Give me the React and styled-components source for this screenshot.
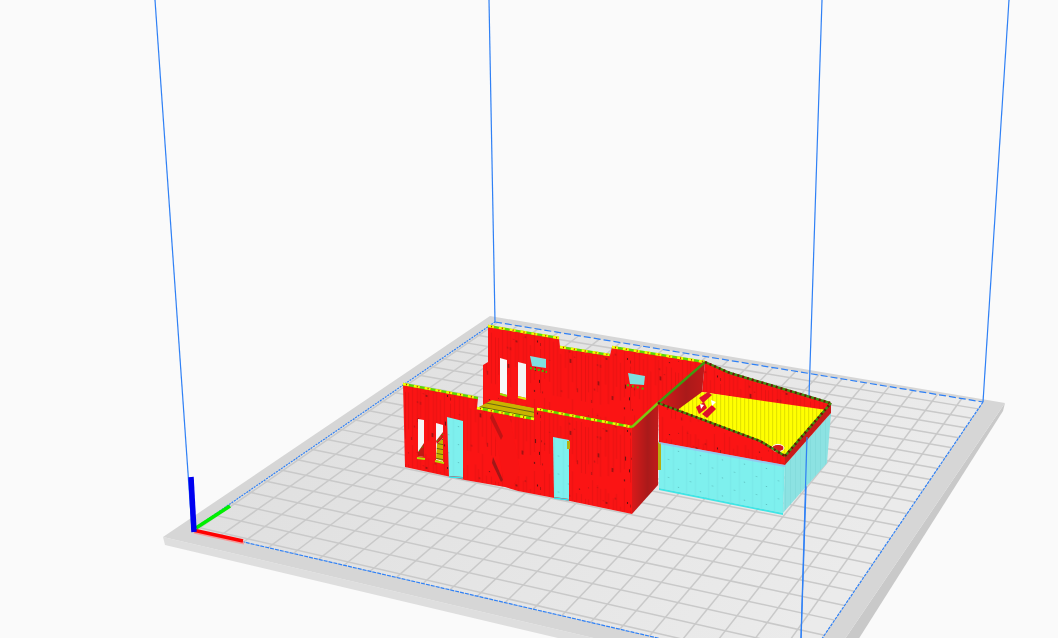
import React from 'react'
import styled, { createGlobalStyle } from 'styled-components'

const GlobalStyle = createGlobalStyle`
html, body {
    margin: 0;
    padding: 0;
    background: #fafafa;
    overflow: hidden;
}
`
const Viewport = styled.main`
width: 1058px;
height: 638px;
background: #fafafa;
`
const Scene = styled.svg`
display: block;
width: 100%;
height: 100%;
`
const GridLine = styled.line`
stroke: #c9c9c9;
stroke-width: 1.5;
`
const BuildEdge = styled.line`
stroke: #2f80f5;
stroke-width: 1.2;
stroke-dasharray: ${props => props.$dash || 'none'};
`
const AxisBar = styled.line`
stroke-width: ${props => props.$weight || 4};
stroke: ${props => props.$color};
stroke-linecap: butt;
`
const TopEdge = styled.polyline`
fill: none;
stroke-width: ${props => props.$weight || 2.4};
stroke: ${props => props.$color};
stroke-dasharray: ${props => props.$dash || 'none'};
stroke-dashoffset: ${props => props.$offset || 0};
`

// build plate corners on screen, front-left then clockwise
const FL = [192, 530]
const BL = [495, 322]
const BR = [983, 402]
const FR = [800, 671]
const CELLS = 22

// square -> quad projective map, so the grid keeps the reference's perspective
function makeProjector(p0, p1, p2, p3) {
    const dx1 = p1[0] - p2[0], dx2 = p3[0] - p2[0], sx = p0[0] - p1[0] + p2[0] - p3[0]
    const dy1 = p1[1] - p2[1], dy2 = p3[1] - p2[1], sy = p0[1] - p1[1] + p2[1] - p3[1]
    const d = dx1 * dy2 - dx2 * dy1
    const g = (sx * dy2 - dx2 * sy) / d
    const h = (dx1 * sy - sx * dy1) / d
    const a = p1[0] - p0[0] + g * p1[0]
    const b = p3[0] - p0[0] + h * p3[0]
    const c = p1[1] - p0[1] + g * p1[1]
    const e = p3[1] - p0[1] + h * p3[1]
    return (u, v) => {
        const w = g * u + h * v + 1
        return [(a * u + b * v + p0[0]) / w, (c * u + e * v + p0[1]) / w]
    }
}
const project = makeProjector(FL, BL, BR, FR)

// the printer's grid isn't aligned to the plate edge, hence the phase
const gridLines = []
for (let i = 0; i < CELLS; i++) {
    const u = (i + 0.25) / CELLS
    const v = (i + 0.14) / CELLS
    gridLines.push([project(u, 0), project(u, 1)])
    gridLines.push([project(0, v), project(1, v)])
}

// same seed every render, the specks just need to look irregular
function seeded(seed) {
    let s = seed
    return () => {
        s = (s * 16807) % 2147483647
        return s / 2147483647
    }
}
const rnd = seeded(4242)
const wallTicks = Array.from({ length: 26 }, () => ({
    x: Math.floor(rnd() * 90),
    y: Math.floor(rnd() * 72),
    h: 1 + Math.floor(rnd() * 4),
    dark: rnd() > 0.7,
}))
const wallStripes = Array.from({ length: 22 }, (_, i) => ({
    x: i * 4 + Math.floor(rnd() * 2),
    y: Math.floor(rnd() * 30),
    h: 30 + Math.floor(rnd() * 42),
}))

function Plate() {
    return (
        <g>
            <polygon points="163,537 165,545 820,700 811,689" fill="#dedede" />
            <polygon points="811,689 820,700 1003,411 1005,403" fill="#c9c9c9" />
            <polygon points="163,537 490,316 1005,403 811,689" fill="#d6d6d6" />
            <polygon points={[FL, BL, BR, FR].join(' ')} fill="url(#surface)" />
            {gridLines.map((l, i) => (
                <GridLine key={i} x1={l[0][0]} y1={l[0][1]} x2={l[1][0]} y2={l[1][1]} />
            ))}
            <BuildEdge x1={FL[0]} y1={FL[1]} x2={BL[0]} y2={BL[1]} $dash="2 1" />
            <BuildEdge x1={BL[0]} y1={BL[1]} x2={BR[0]} y2={BR[1]} $dash="7 3" />
            <BuildEdge x1={BR[0]} y1={BR[1]} x2={FR[0]} y2={FR[1]} $dash="3 1" />
            <BuildEdge x1={FR[0]} y1={FR[1]} x2={FL[0]} y2={FL[1]} $dash="4 1" />
            <BuildEdge x1={155} y1={0} x2={FL[0]} y2={FL[1]} />
            <BuildEdge x1={489} y1={0} x2={BL[0]} y2={BL[1]} />
            <BuildEdge x1={822} y1={0} x2={FR[0]} y2={FR[1]} />
            <BuildEdge x1={1009} y1={0} x2={BR[0]} y2={BR[1]} />
        </g>
    )
}

function Axes() {
    return (
        <g>
            <AxisBar x1={194} y1={532} x2={244} y2={543} $color="#f59a9a" $weight={3} />
            <AxisBar x1={193} y1={530} x2={243} y2={541} $color="#ff0000" $weight={3.5} />
            <AxisBar x1={196} y1={528} x2={230} y2={506} $color="#00f000" $weight={3.6} />
            <AxisBar x1={191} y1={477} x2={194} y2={532} $color="#0000f0" $weight={5.5} />
        </g>
    )
}

const topEdgePaths = [
    '403,384 478,398',
    '488,326 559,338',
    '560,347 610,355',
    '612,347 705,362',
    '477,408 534,419',
    '537,409 632,427',
]
const darkEdgePaths = [
    '705,362 730,373 830,403',
    '658,403 760,441 785,456',
    '785,456 831,403',
]

function Model() {
    return (
        <g>
            {/* garage shell, see-through cyan below the roof */}
            <polygon points="659,442 785,465 783,513 659,488" fill="url(#cyanFront)" />
            <polygon points="785,465 831,413 827,463 783,513" fill="url(#cyanSide)" />
            <polygon points="659,488 783,513 783,515 659,490" fill="#3fe6e6" />
            <polygon points="657,442 661,443 661,470 657,470" fill="#b8ae10" />

            {/* roof */}
            <polygon points="705,362 730,373 831,403 827,412 702,392" fill="url(#redWall)" />
            <polygon points="658,403 705,362 702,392 686,416" fill="url(#darkRed)" />
            <polygon points="702,392 827,410 785,458 676,411" fill="url(#yellowFill)" />
            <polygon points="658,403 760,441 785,456 785,465 659,442" fill="url(#redWall)" />
            <polygon points="785,456 831,403 831,413 785,465" fill="#c81a1a" />
            <polygon points="659,442 785,465 785,467 659,444" fill="#a6a8f0" opacity="0.55" />

            {/* specks on the roof */}
            <polygon points="696,407 704,402 707,408 699,414" fill="#e0102a" />
            <polygon points="702,414 712,405 716,409 707,418" fill="#e0102a" />
            <polygon points="699,398 708,392 712,395 703,403" fill="#e0102a" />
            <polygon points="711,400 716,402 712,406" fill="#ffffff" />
            <polygon points="700,404 704,405 701,409" fill="#ffffff" />
            <ellipse cx="778" cy="448" rx="6" ry="3.6" fill="#d41a1a" stroke="#ffffff" strokeWidth="1" />

            {/* back wall */}
            <polygon
                points="488,326 559,338 560,347 610,355 612,347 705,362 658,403 632,427 537,420 483,410 483,365 488,362"
                fill="url(#redWall)"
            />
            {/* back wall openings */}
            <polygon points="500,358 507,360 507,395 500,393" fill="#f8f8f8" />
            <polygon points="518,362 526,364 526,398 518,396" fill="#f4f4f4" />
            <polygon points="530,356 546,359 546,368 532,366" fill="#7fdede" />
            <polygon points="628,373 645,376 644,385 630,384" fill="#7fdede" />
            <polyline points="500,394 507,396" fill="none" stroke="#9be000" strokeWidth="2" />
            <polyline points="518,397 526,399" fill="none" stroke="#d8ea00" strokeWidth="2" />
            <polyline points="530,368 547,372" fill="none" stroke="#45b800" strokeWidth="2" strokeDasharray="2 2" />
            <polyline points="627,385 645,389" fill="none" stroke="#45b800" strokeWidth="2" strokeDasharray="2 3" />

            {/* slab behind the bay */}
            <polygon points="477,408 492,400 534,408 534,419" fill="url(#oliveFill)" />

            {/* corner side, shaded */}
            <polygon points="632,427 658,403 658,485 632,514" fill="url(#darkRed)" />

            {/* front walls */}
            <polygon
                points="403,384 478,398 477,408 534,419 537,409 632,427 632,514 570,501 518,491 505,487 465,480 405,467"
                fill="url(#redWall)"
            />
            <polygon points="490,413 510,417 520,470 513,487 505,487 497,445" fill="#f81414" />
            <polygon points="492,413 503,436 501,440 490,418" fill="#c01414" />
            <polygon points="493,457 503,480 501,482 492,463" fill="#a01818" />

            {/* front openings */}
            <polygon points="418,419 424,420 424,457 418,456" fill="#f6f6f6" />
            <polygon points="418,452 424,443 424,457 418,456" fill="#c01a12" />
            <polyline points="419,451 424,445" fill="none" stroke="#3cb800" strokeWidth="1" strokeDasharray="2 2" />
            <polygon points="436,423 443,425 443,462 436,460" fill="#f6f6f6" />
            <polygon points="437,444 443,438 443,461 436,459" fill="url(#oliveFill)" />
            <polygon points="436,441 443,432 443,438 437,444" fill="#d01a12" />
            <polyline points="437,441 443,434" fill="none" stroke="#3cb800" strokeWidth="1" strokeDasharray="2 2" />
            <polygon points="447,417 463,421 463,477 449,476" fill="url(#cyanFront)" />
            <polygon points="553,437 569,440 569,499 554,497" fill="url(#cyanFront)" />
            <polygon points="567,441 570,441 570,449 567,449" fill="#b8ae10" />
            <polyline points="449,477 463,478" fill="none" stroke="#30e8f0" strokeWidth="1.5" />
            <polyline points="554,498 569,500" fill="none" stroke="#30e8f0" strokeWidth="1.5" />
            <polyline points="417,458 425,459" fill="none" stroke="#b8e000" strokeWidth="2" />
            <polyline points="435,461 444,463" fill="none" stroke="#b8e000" strokeWidth="2" />

            {/* wall tops */}
            {topEdgePaths.map(p => (
                <g key={p}>
                    <TopEdge points={p} $color="#5fd800" />
                    <TopEdge points={p} $color="#f4ff00" $dash="6 5" />
                    <TopEdge points={p} $color="#c81808" $dash="1 10" $weight={1.6} $offset={8} />
                </g>
            ))}
            <TopEdge points="632,427 658,403" $color="#7cc810" />
            <TopEdge points="658,403 705,362" $color="#3f9a10" />
            {darkEdgePaths.map(p => (
                <g key={p}>
                    <TopEdge points={p} $color="#3f9010" />
                    <TopEdge points={p} $color="#701008" $dash="2 3" />
                </g>
            ))}
        </g>
    )
}

export default function App() {
    return (
        <Viewport>
            <GlobalStyle />
            <Scene viewBox="0 0 1058 638" xmlns="http://www.w3.org/2000/svg">
                <defs>
                    <linearGradient id="surface" gradientUnits="userSpaceOnUse" x1="300" y1="300" x2="800" y2="640">
                        <stop offset="0" stopColor="#dfdfdf" />
                        <stop offset="1" stopColor="#ebebeb" />
                    </linearGradient>
                    <pattern id="redWall" width="90" height="72" patternUnits="userSpaceOnUse" patternTransform="skewY(11)">
                        <rect width="90" height="72" fill="#fb1414" />
                        {wallStripes.map((s, i) => (
                            <rect key={i} x={s.x} y={s.y} width="1" height={s.h} fill="#e81212" />
                        ))}
                        {wallTicks.map((t, i) => (
                            <rect key={i} x={t.x} y={t.y} width="1" height={t.h} fill={t.dark ? '#5a1010' : '#b81212'} />
                        ))}
                    </pattern>
                    <linearGradient id="darkRed" x1="0" y1="0" x2="1" y2="0">
                        <stop offset="0" stopColor="#d81a1a" />
                        <stop offset="0.6" stopColor="#aa1a1a" />
                        <stop offset="1" stopColor="#c01a1a" />
                    </linearGradient>
                    <pattern id="yellowFill" width="4" height="8" patternUnits="userSpaceOnUse" patternTransform="skewY(9)">
                        <rect width="4" height="8" fill="#ffff00" />
                        <rect width="1" height="8" fill="#e0e000" />
                    </pattern>
                    <pattern id="oliveFill" width="6" height="5" patternUnits="userSpaceOnUse" patternTransform="skewY(11)">
                        <rect width="6" height="5" fill="#c8b400" />
                        <rect y="3" width="6" height="1" fill="#6c6410" />
                    </pattern>
                    <pattern id="cyanFront" width="22" height="18" patternUnits="userSpaceOnUse" patternTransform="skewY(11)">
                        <rect width="22" height="18" fill="#7ef0ee" />
                        <rect x="4" width="1" height="18" fill="#78e8e8" />
                        <rect x="13" width="1" height="18" fill="#78e8e8" />
                        <rect x="8" y="5" width="1" height="1" fill="#58b8b8" />
                        <rect x="18" y="13" width="1" height="1" fill="#58b8b8" />
                    </pattern>
                    <pattern id="cyanSide" width="5" height="7" patternUnits="userSpaceOnUse">
                        <rect width="5" height="7" fill="#8ce2e2" />
                        <rect width="1" height="7" fill="#84dcdc" />
                    </pattern>
                </defs>
                <Plate />
                <Axes />
                <Model />
                {/* this upright shows through the see-through garage */}
                <BuildEdge x1={807} y1={437} x2={FR[0]} y2={FR[1]} />
            </Scene>
        </Viewport>
    )
}
